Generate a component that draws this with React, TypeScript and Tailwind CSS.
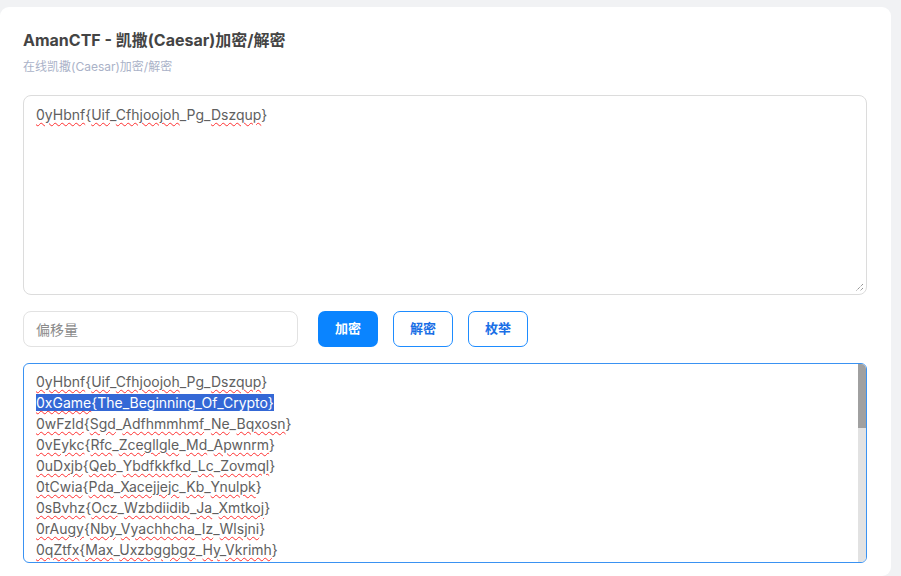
import React from 'react';

const FONT = { fontFamily: 'Inter, "Noto Sans CJK SC", sans-serif' };

// each line: list of [text, misspelled]
type Seg = [string, boolean];

const W = (t: string): Seg => [t, true];
const P = (t: string): Seg => [t, false];

const outputLines: Seg[][] = [
  [W('0yHbnf'), P('{'), W('Uif'), P('_'), W('Cfhjoojoh'), P('_Pg_'), W('Dszqup'), P('}')],
  [W('0xGame'), P('{The_Beginning_Of_Crypto}')],
  [W('0wFzld'), P('{'), W('Sgd'), P('_'), W('Adfhmmhmf'), P('_'), W('Ne'), P('_'), W('Bqxosn'), P('}')],
  [W('0vEykc'), P('{'), W('Rfc'), P('_'), W('Zcegllgle'), P('_'), W('Md'), P('_'), W('Apwnrm'), P('}')],
  [W('0uDxjb'), P('{'), W('Qeb'), P('_'), W('Ybdfkkfkd'), P('_'), W('Lc'), P('_'), W('Zovmql'), P('}')],
  [W('0tCwia'), P('{'), W('Pda'), P('_'), W('Xacejjejc'), P('_'), W('Kb'), P('_'), W('Ynulpk'), P('}')],
  [W('0sBvhz'), P('{'), W('Ocz'), P('_'), W('Wzbdiidib'), P('_'), W('Ja'), P('_'), W('Xmtkoj'), P('}')],
  [W('0rAugy'), P('{'), W('Nby'), P('_'), W('Vyachhcha'), P('_'), W('Iz'), P('_'), W('Wlsjni'), P('}')],
  [W('0qZtfx'), P('{'), W('Max'), P('_'), W('Uxzbggbgz'), P('_'), W('Hy'), P('_'), W('Vkrimh'), P('}')],
];

function Line({ segs }: { segs: Seg[] }) {
  return (
    <>
      {segs.map(([t, bad], i) =>
        bad ? (
          <span
            key={i}
            className="underline decoration-wavy decoration-[#ff3030] decoration-1 underline-offset-[2px]"
          >
            {t}
          </span>
        ) : (
          <span key={i}>{t}</span>
        ),
      )}
    </>
  );
}

function Grip() {
  return (
    <svg className="absolute right-[2px] bottom-[2px]" width="9" height="9" viewBox="0 0 9 9">
      <path d="M8 1 L1 8 M8 5 L5 8" stroke="#666" strokeWidth="1" strokeDasharray="1 1" />
    </svg>
  );
}

export default function App() {
  return (
    <div className="min-h-[576px] bg-[#f1f2f4] pt-[7px] pr-[10px]" style={FONT}>
      <div className="bg-white rounded-r-[9px] rounded-tl-[9px] min-h-[569px] px-[23px] pr-[24px] pt-[21px]">
        <h1 className="text-[16px] font-bold text-[#444] leading-[24px]">AmanCTF - 凯撒(Caesar)加密/解密</h1>
        <p className="text-[12px] text-[#aab2c8] leading-[18px] mt-[6px]">在线凯撒(Caesar)加密/解密</p>

        <div className="relative mt-[19px] h-[200px] rounded-[8px] border border-[#dcdcdc] px-[12px] py-[8px] text-[14px] text-[#606060] leading-[21px]">
          <Line segs={outputLines[0]} />
          <Grip />
        </div>

        <div className="flex items-center mt-[16px] h-[36px]">
          <div className="w-[275px] h-[36px] rounded-[8px] border border-[#e2e2e2] flex items-center px-[12px] text-[14px] text-[#8a8a8a]">
            偏移量
          </div>
          <button className="ml-[20px] w-[60px] h-[36px] rounded-[7px] bg-[#0a84ff] text-white text-[13px] font-bold">
            加密
          </button>
          <button className="ml-[15px] w-[60px] h-[36px] rounded-[7px] border border-[#1e8cff] text-[#1a6fe6] text-[13px] font-bold">
            解密
          </button>
          <button className="ml-[15px] w-[60px] h-[36px] rounded-[7px] border border-[#1e8cff] text-[#1a6fe6] text-[13px] font-bold">
            枚举
          </button>
        </div>

        <div className="relative mt-[16px] h-[200px] rounded-[6px] border border-[#3a92f2] flex overflow-hidden">
          <div className="flex-1 px-[12px] pt-[7px] text-[14px] text-[#606060] leading-[21px] overflow-hidden">
            {outputLines.map((l, i) =>
              i === 1 ? (
                <div key={i}>
                  <span className="bg-[#3468d6] text-white">
                    <Line segs={l} />
                  </span>
                </div>
              ) : (
                <div key={i}>
                  <Line segs={l} />
                </div>
              ),
            )}
          </div>
          <div className="w-[8px] bg-[#e2e2e2] flex flex-col">
            <div className="h-[64px] bg-[#a0a0a0]" />
          </div>
        </div>
      </div>
    </div>
  );
}
